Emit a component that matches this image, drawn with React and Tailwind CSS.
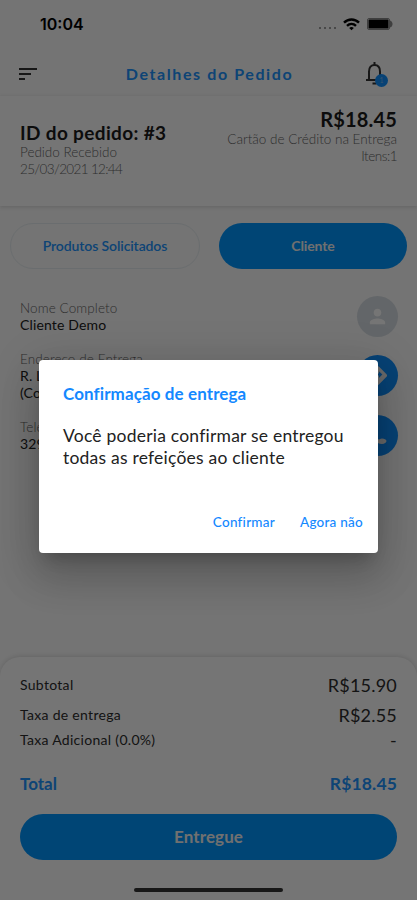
import { MdDirections, MdPerson } from "react-icons/md";

const ORDER = {
  id: "#3",
  status: "Pedido Recebido",
  date: "25/03/2021 12:44",
  total: "R$18.45",
  payment: "Cartão de Crédito na Entrega",
  items: "Itens:1"
};

// status bar: clock, signal, wifi, battery
function StatusBar() {
  return (
    <div className="flex h-12 items-center justify-between pl-10 pr-6">
      <span className="font-[Inter] text-base leading-none font-semibold">10:04</span>
      <div className="flex items-center">
        <div className="mt-2 mr-[7px] flex gap-[2.5px]">
          {[0, 1, 2, 3].map((i) => (
            <span key={i} className="size-[2.5px] rounded-full bg-[#808080]" />
          ))}
        </div>
        <svg width="17" height="13" viewBox="0 0 17 13" className="mr-[7px]" fill="none" stroke="#000" strokeWidth="2.4">
          <path d="M1 4.6C5.2.4 11.8.4 16 4.6" />
          <path d="M4 7.8c2.6-2.5 6.4-2.5 9 0" />
          <path d="M6.2 9.9c1.3-1.2 3.3-1.2 4.6 0L8.5 12.3z" fill="#000" stroke="none" />
        </svg>
        <svg width="26" height="12" viewBox="0 0 26 12">
          <rect x=".5" y=".5" width="22" height="11" rx="1.5" fill="none" stroke="#8a8a8a" />
          <rect x="1.5" y="1.5" width="20" height="9" rx=".5" fill="#000" />
          <path d="M23 2.5c3.4 1 3.4 6 0 7z" fill="#8a8a8a" />
        </svg>
      </div>
    </div>
  );
}

function Header() {
  return (
    <header className="flex h-12 items-center justify-between pt-0.5 pl-[19px] pr-7">
      <svg width="18" height="14" viewBox="0 0 18 14" fill="#333" className="mt-0.5">
        <rect y="1" width="18" height="2" />
        <rect y="6" width="12" height="2" />
        <rect y="11" width="6" height="2" />
      </svg>
      <h1 className="mt-0.5 ml-[17px] text-base leading-none font-bold tracking-[1.6px] text-[#2094ff]">Detalhes do Pedido</h1>
      <div className="relative h-6 w-6">
        <svg width="20" height="24" viewBox="0 0 20 24" fill="none" stroke="#333" strokeWidth="2">
          <path d="M1 19h2.5L4 17.5V10.5C4 6.4 6.2 4 9.5 4S15 6.4 15 10.5V17.5L15.5 19H18" />
          <path d="M3 19h13M9.5 1v3" />
          <path d="M7.5 22.5h4" />
        </svg>
        <span className="absolute top-[13px] left-[10px] flex size-[13px] items-center justify-center rounded-full bg-[#1090ff] text-[7px] text-[#7cb8f4]">1</span>
      </div>
    </header>
  );
}

function Field({ label, lines, children, className }) {
  return (
    <div className={`flex items-center justify-between pl-5 pr-[19px] ${className}`}>
      <div className="whitespace-nowrap">
        <div className="text-[13.5px] leading-[17px] font-light tracking-[0.1px] text-[#666]">{label}</div>
        <div className="-mt-px text-sm leading-[17px] tracking-[0.15px] text-[#222]">
          {lines.map((l) => (
            <div key={l}>{l}</div>
          ))}
        </div>
      </div>
      {children}
    </div>
  );
}

function Row({ label, value, className, labelClass = "text-sm tracking-[0.3px]", valueClass = "text-lg tracking-[0.2px]" }) {
  return (
    <div className={`flex items-center justify-between ${className}`}>
      <span className={labelClass}>{label}</span>
      <span className={valueClass}>{value}</span>
    </div>
  );
}

export default function App() {
  return (
    <div className="relative flex h-[900px] w-[417px] flex-col overflow-hidden bg-[#fcfcfc] font-['Lato',sans-serif] text-black">
      <StatusBar />
      <Header />

      {/* Order summary */}
      <section className="flex h-[110px] justify-between bg-white pl-5 pr-5 shadow-[0_1px_4px_rgba(0,0,0,0.15)]">
        <div className="pt-[26px]">
          <div className="text-[19px] leading-[22px] font-bold tracking-[0.35px] text-[#1c1c1c]">ID do pedido: {ORDER.id}</div>
          <div className="text-[13.5px] leading-[17px] font-light text-[#666]">{ORDER.status}</div>
          <div className="text-[13.5px] leading-[16px] font-light tracking-[-0.65px] text-[#666]">{ORDER.date}</div>
        </div>
        <div className="pt-[12px] text-right">
          <div className="text-[20px] leading-[22px] font-bold tracking-[0.15px] text-[#1c1c1c]">{ORDER.total}</div>
          <div className="mt-px text-[13.5px] leading-[17px] font-light text-[#666]">{ORDER.payment}</div>
          <div className="text-[13.5px] leading-[16px] font-light tracking-[-0.5px] text-[#666]">{ORDER.items}</div>
        </div>
      </section>

      {/* Tabs */}
      <div className="mt-[17px] flex gap-[19px] px-2.5 text-sm">
        <button className="h-[46px] flex-1 rounded-full border border-[#e8eef2] font-semibold tracking-[-0.1px] text-[#2094ff]">Produtos Solicitados</button>
        <button className="h-[46px] flex-1 rounded-full bg-[#0096ff] font-bold tracking-[-0.1px] text-[#f4f4f4]">Cliente</button>
      </div>

      {/* Customer */}
      <Field label="Nome Completo" lines={["Cliente Demo"]} className="mt-[27px] h-[41px]">
        <span className="flex size-[41px] items-center justify-center rounded-full bg-[#d8dee4] text-white">
          <MdPerson size={23} />
        </span>
      </Field>
      <Field label="Endereço de Entrega" lines={["R. L", "(Co"]} className="mt-[12px] h-[53px]">
        <span className="flex size-[41px] items-center justify-center rounded-full bg-[#1090ff] text-[#e8e8e8]">
          <MdDirections size={23} />
        </span>
      </Field>
      <Field label="Telefone" lines={["329"]} className="mt-[13px] h-[41px]">
        <span className="flex size-[41px] items-center justify-center rounded-full bg-[#1090ff]">
          <svg width="18" height="18" viewBox="0 0 18 18" fill="#e8e8e8">
            <path d="M4 1C6 1 7 4 7 5.5S5.5 7 5.5 8s3.5 4.500 4.500 4.500S11 11.500 13 11.500s4.500 1 4.500 2.500-2 3-4.500 3C7.500 17 1 10.500 1 5 1 2.500 2.500 1 4 1z" />
          </svg>
        </span>
      </Field>

      {/* Totals */}
      <section className="mt-auto h-[243px] rounded-t-[20px] bg-white px-5 pt-[16px] text-[#2c2c2c] shadow-[0_-1px_4px_rgba(0,0,0,0.12)]">
        <Row label="Subtotal" value="R$15.90" className="h-[24px]" />
        <Row label="Taxa de entrega" value="R$2.55" className="mt-[5px] h-[25px]" />
        <Row label="Taxa Adicional (0.0%)" value="-" className="h-[25px]" />
        <Row label="Total" value={ORDER.total} className="mt-[19px] h-[26px] font-bold text-[#2094ff]" labelClass="text-[17px]" valueClass="text-[17.5px] tracking-[0.15px]" />
        <button className="mt-[17px] h-[46px] w-full rounded-full bg-[#0096ff] text-[17px] font-bold tracking-[0.1px] text-[#f4f4f4]">Entregue</button>
        <div className="mx-auto mt-7 h-1 w-[149px] rounded-full bg-[#333]" />
      </section>

      {/* Dialog */}
      <div className="absolute inset-0 flex items-start bg-black/54 pl-[39px]">
        <div className="mt-[360px] h-[193px] w-[339px] rounded-[4px] bg-white px-6 pt-[23px] shadow-[0_11px_15px_-7px_rgba(0,0,0,0.2),0_24px_38px_3px_rgba(0,0,0,0.14),0_9px_46px_8px_rgba(0,0,0,0.12)]">
          <h2 className="text-[17px] leading-[22px] font-bold tracking-[0.1px] text-[#1488ff]">Confirmação de entrega</h2>
          <p className="mt-5 text-[17.5px] leading-[22px] tracking-[0.22px] whitespace-nowrap text-[#222]">
            Você poderia confirmar se entregou
            <br />
            todas as refeições ao cliente
          </p>
          <div className="-mr-[9px] mt-[43px] flex justify-end gap-[25px] text-[13.5px] font-medium tracking-[0.25px] text-[#1488ff]">
            <button>Confirmar</button>
            <button>Agora não</button>
          </div>
        </div>
      </div>
    </div>
  );
}
